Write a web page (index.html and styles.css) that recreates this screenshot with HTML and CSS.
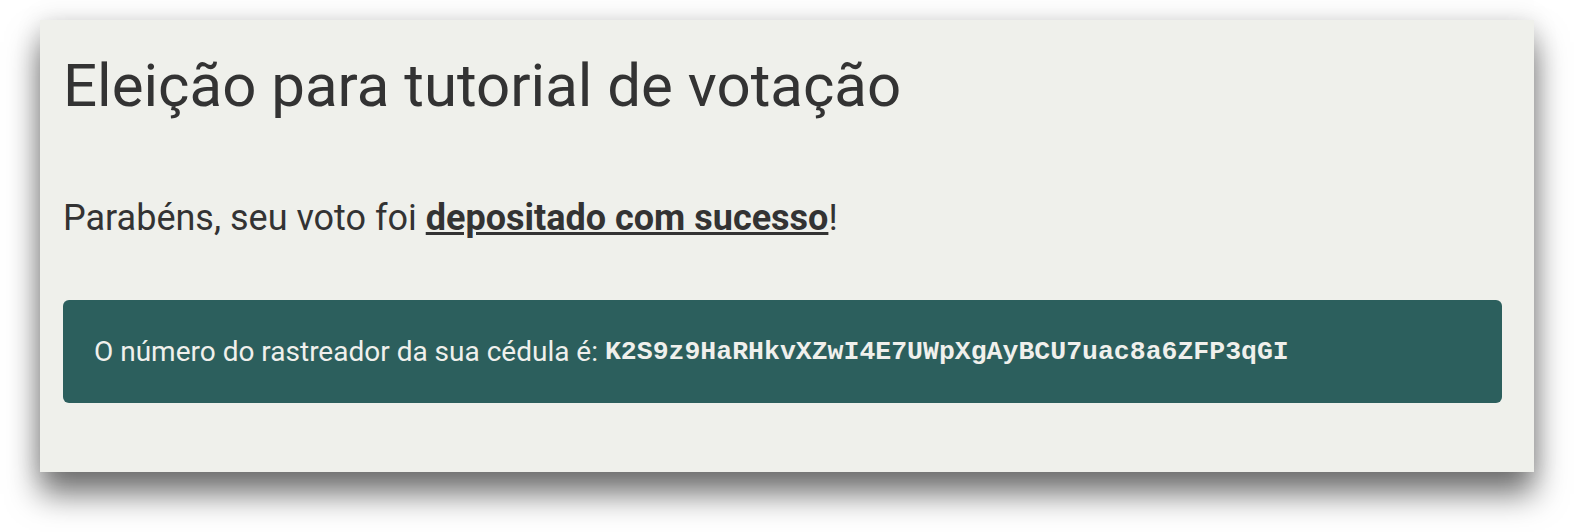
FILE: index.html
```html
<!DOCTYPE html>
<html lang="pt">
<head>
<meta charset="utf-8">
<title>Eleição para tutorial de votação</title>
<link rel="stylesheet" href="styles.css">
</head>
<body>
<div class="page">
  <main class="card">
    <h1 class="title">Eleição para tutorial de votação</h1>
    <p class="lead">Parabéns, seu voto foi <a class="lead-link" href="#">depositado com sucesso</a>!</p>
    <div class="tracker">O número do rastreador da sua cédula é: <code class="tracker-code">K2S9z9HaRHkvXZwI4E7UWpXgAyBCU7uac8a6ZFP3qGI</code></div>
  </main>
</div>
</body>
</html>
```
FILE: styles.css
```css
html, body {
  margin: 0;
  padding: 0;
  background: #ffffff;
}

body {
  font-family: Roboto, "Liberation Sans", sans-serif;
  color: #333333;
}

.page {
  padding: 20px 40px 60px 40px;
}

.card {
  display: flex;
  flex-direction: column;
  height: 452px;
  box-sizing: border-box;
  padding: 30px 32px 0 23px;
  background: #eff0eb;
  box-shadow: 0 22px 30px rgba(0, 0, 0, 0.55), 0 0 24px rgba(0, 0, 0, 0.12);
}

.title {
  margin: 0;
  font-size: 60px;
  font-weight: 400;
  line-height: 72px;
  color: #333333;
}

.lead {
  margin: 75px 0 0 0;
  font-size: 36px;
  line-height: 43px;
  color: #333333;
}

.lead-link {
  color: #333333;
  font-weight: 700;
  text-decoration: underline;
}

.tracker {
  margin-top: 60px;
  height: 103px;
  flex-shrink: 0;
  box-sizing: border-box;
  display: flex;
  align-items: center;
  padding: 0 31px;
  background: #2c5f5d;
  border-radius: 6px;
  color: #f0f0ec;
  font-size: 28px;
  white-space: pre;
}

.tracker-code {
  font-family: "Liberation Mono", "Courier New", monospace;
  font-weight: 700;
  font-size: 26.5px;
  color: #f0f0ec;
}
```
